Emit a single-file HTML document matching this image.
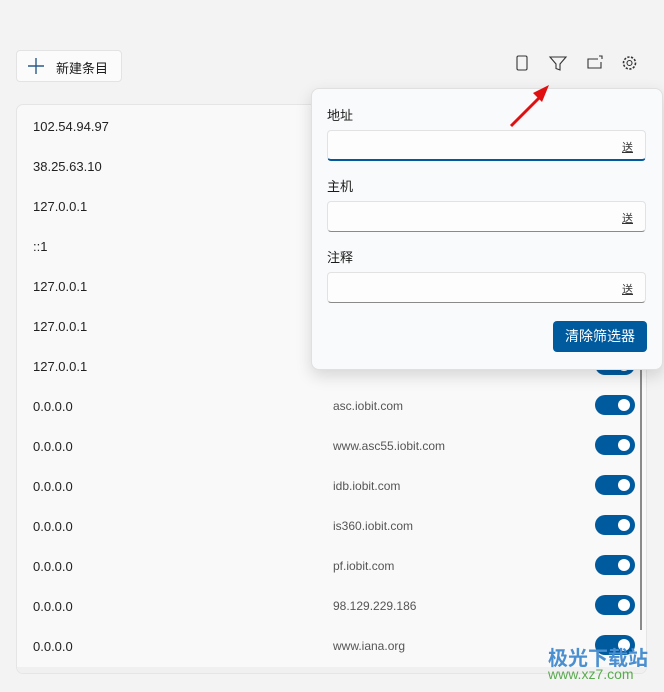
<!DOCTYPE html>
<html><head><meta charset="utf-8"><style>
body{margin:0;width:664px;height:692px;background:#f3f3f3;font-family:"Liberation Sans","Noto Sans CJK SC",sans-serif;position:relative;overflow:hidden;color:#1b1b1b}
.abs{position:absolute}
.btn{left:16px;top:50px;width:106px;height:32px;background:#fbfbfb;border:1px solid #e3e3e3;border-radius:4px;box-sizing:border-box}
.card{left:16px;top:104px;width:631px;height:570px;background:#f9f9f9;border:1px solid #e5e5e5;border-radius:7px;box-sizing:border-box}
.row{position:absolute;left:16px;font-size:13px;color:#222}
.host{position:absolute;left:333px;font-size:12px;color:#555}
.tg{position:absolute;left:595px;width:40px;height:20px;border-radius:10px;background:#005a9e}
.tg::after{content:"";position:absolute;right:5px;top:4px;width:12px;height:12px;border-radius:6px;background:#fff}
.pop{left:311px;top:88px;width:352px;height:282px;background:#f9fafb;border:1px solid #e0e0e0;border-radius:8px;box-shadow:0 6px 16px rgba(0,0,0,.14);box-sizing:border-box}
.lab{position:absolute;left:15px;font-size:13px;color:#1b1b1b}
.inp{position:absolute;left:15px;width:319px;height:31px;background:#fdfdfd;border:1px solid #e2e2e2;border-bottom:1px solid #8a8a8a;border-radius:4px;box-sizing:border-box}
.inp span{position:absolute;right:12px;top:8px;font-size:11px;text-decoration:underline;color:#333}
</style></head><body>
<div class="abs btn"><svg class="abs" style="left:10px;top:6px" width="18" height="18"><path d="M9 1v16M1 9h16" stroke="#2a5b8a" stroke-width="1.4"/></svg><span class="abs" style="left:39px;top:7px;font-size:13px">新建条目</span></div>
<svg class="abs" style="left:505px;top:50px" width="150" height="28" fill="none" stroke="#333" stroke-width="1.1">
<rect x="12" y="6" width="10" height="14" rx="1.5"/>
<path d="M45 7h16l-6 7v6l-4-1.5v-4.5z"/>
<path d="M93 9h-10v9h13v-6M94 6h3v3"/>
<circle cx="124.5" cy="13" r="2.5"/><circle cx="124.5" cy="13" r="6" stroke-dasharray="2.2 1.5" stroke-width="1.6"/>
</svg>
<div class="abs card">
<div class="row" style="top:14px">102.54.94.97</div>
<div class="row" style="top:54px">38.25.63.10</div>
<div class="row" style="top:94px">127.0.0.1</div>
<div class="row" style="top:134px">::1</div>
<div class="row" style="top:174px">127.0.0.1</div>
<div class="row" style="top:214px">127.0.0.1</div>
<div class="row" style="top:254px">127.0.0.1</div>
<div class="row" style="top:294px">0.0.0.0</div>
<div class="row" style="top:334px">0.0.0.0</div>
<div class="row" style="top:374px">0.0.0.0</div>
<div class="row" style="top:414px">0.0.0.0</div>
<div class="row" style="top:454px">0.0.0.0</div>
<div class="row" style="top:494px">0.0.0.0</div>
<div class="row" style="top:534px">0.0.0.0</div>
<div style="position:absolute;left:0;right:0;top:562px;height:6px;background:#f0f0f0;border-radius:0 0 6px 6px"></div>
</div>
<div class="host" style="top:399px">asc.iobit.com</div><div class="tg" style="top:395px"></div>
<div class="host" style="top:439px">www.asc55.iobit.com</div><div class="tg" style="top:435px"></div>
<div class="host" style="top:479px">idb.iobit.com</div><div class="tg" style="top:475px"></div>
<div class="host" style="top:519px">is360.iobit.com</div><div class="tg" style="top:515px"></div>
<div class="host" style="top:559px">pf.iobit.com</div><div class="tg" style="top:555px"></div>
<div class="host" style="top:599px">98.129.229.186</div><div class="tg" style="top:595px"></div>
<div class="host" style="top:639px">www.iana.org</div><div class="tg" style="top:635px"></div>
<div class="tg" style="top:355px"></div>
<div class="abs" style="left:640px;top:358px;width:2px;height:272px;background:#8a8a8a"></div>
<div class="abs pop">
<div class="lab" style="top:16px">地址</div>
<div class="inp" style="top:41px;border-bottom:2px solid #005a9e"><span>送</span></div>
<div class="lab" style="top:87px">主机</div>
<div class="inp" style="top:112px"><span>送</span></div>
<div class="lab" style="top:158px">注释</div>
<div class="inp" style="top:183px"><span>送</span></div>
<div style="position:absolute;left:241px;top:232px;width:94px;height:31px;background:#005a9e;border-radius:4px;color:#fff;font-size:14px;text-align:center;line-height:31px">清除筛选器</div>
</div>
<svg class="abs" style="left:505px;top:80px" width="50" height="50"><path d="M6 46L38 14" stroke="#e01010" stroke-width="3"/><path d="M44 5L28 13l9 9z" fill="#e01010"/></svg>
<div class="abs" style="left:548px;top:642px;font-size:20px;font-weight:bold;color:#4a8fd0">极光下载站</div>
<div class="abs" style="left:548px;top:666px;font-size:14px;color:#5aaa50">www.xz7.com</div>
</body></html>
